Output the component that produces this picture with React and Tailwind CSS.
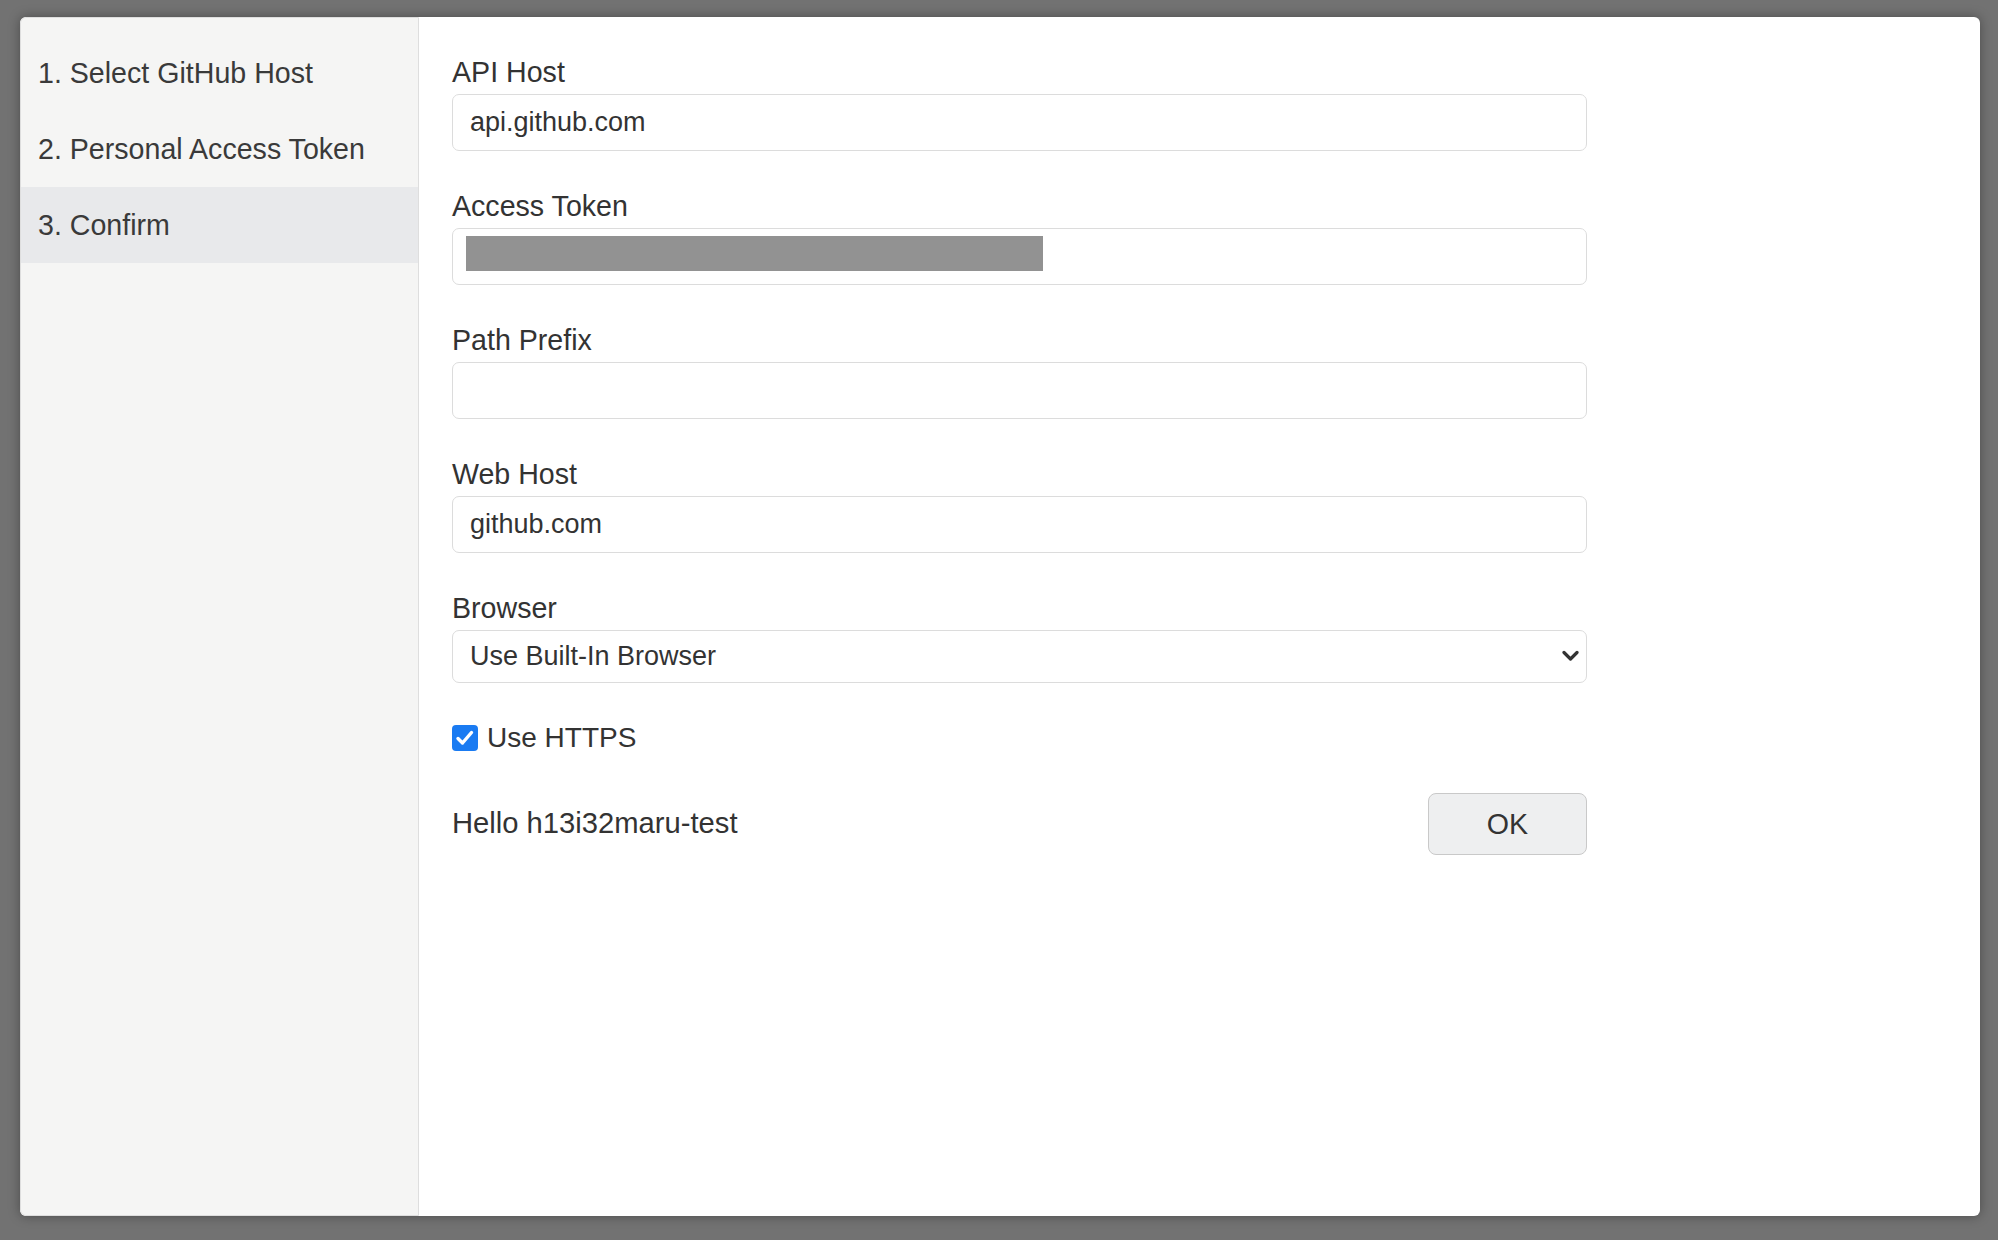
import React from 'react';

// Setup dialog: step list on the left, the confirm form on the right

const steps = ['1. Select GitHub Host', '2. Personal Access Token', '3. Confirm'];

function Field({ label, children }) {
  return (
    <div className="flex flex-col">
      <label className="h-[34px] leading-[34px] text-[28.6px] text-[#333] mb-[5px]">{label}</label>
      {children}
    </div>
  );
}

function TextInput({ value }) {
  return (
    <input
      readOnly
      value={value}
      className="h-[57px] w-full rounded-[7px] border border-[#dcdcdc] bg-white px-[17px] text-[27px] text-[#333] outline-none"
    />
  );
}

export default function App() {
  const active = 2;

  return (
    <div
      className="w-[1998px] h-[1240px] bg-[#727272] pt-[17px] pl-[20px]"
      style={{ fontFamily: '"Liberation Sans", Arial, sans-serif' }}
    >
      <div className="flex w-[1960px] h-[1199px] rounded-[6px] overflow-hidden bg-white shadow-[0_0_12px_rgba(0,0,0,0.35)]">
        {/* Steps */}
        <div className="w-[399px] shrink-0 bg-[#f5f5f4] border border-[#dedede] rounded-l-[6px] pt-[17px]">
          {steps.map((s, i) => (
            <div
              key={s}
              className={
                'h-[76px] flex items-center pl-[17px] text-[28.6px] text-[#3a3a3a] ' +
                (i === active ? 'bg-[#e8e9eb]' : '')
              }
            >
              {s}
            </div>
          ))}
        </div>

        {/* Form */}
        <div className="flex-1 pl-[33px] pt-[38px]">
          <div className="w-[1135px] flex flex-col gap-[38px]">
            <Field label="API Host">
              <TextInput value="api.github.com" />
            </Field>

            <Field label="Access Token">
              <div className="h-[57px] w-full rounded-[7px] border border-[#dcdcdc] bg-white pl-[13px] pt-[7px]">
                <div className="w-[577px] h-[35px] bg-[#929292]" />
              </div>
            </Field>

            <Field label="Path Prefix">
              <TextInput value="" />
            </Field>

            <Field label="Web Host">
              <TextInput value="github.com" />
            </Field>

            <Field label="Browser">
              <div className="relative">
                <select
                  defaultValue="builtin"
                  className="appearance-none h-[53px] w-full rounded-[7px] border border-[#dcdcdc] bg-white px-[17px] text-[27px] text-[#333] outline-none"
                >
                  <option value="builtin">Use Built-In Browser</option>
                  <option value="external">Use External Browser</option>
                </select>
                <svg
                  className="absolute right-[8px] top-[20px] pointer-events-none"
                  width="17"
                  height="12"
                  viewBox="0 0 17 12"
                  fill="none"
                >
                  <path d="M2 2.5 L8.5 9 L15 2.5" stroke="#333" strokeWidth="3.2" strokeLinecap="round" strokeLinejoin="round" />
                </svg>
              </div>
            </Field>

            <div className="flex items-center h-[34px] gap-[9px]">
              <span className="w-[26px] h-[26px] rounded-[4px] bg-[#1a7bf2] flex items-center justify-center">
                <svg width="20" height="18" viewBox="0 0 20 18" fill="none">
                  <path d="M3 9.5 L7.5 14 L16.5 3.5" stroke="#fff" strokeWidth="3.4" strokeLinecap="round" strokeLinejoin="round" />
                </svg>
              </span>
              <span className="text-[28px] text-[#333]">Use HTTPS</span>
            </div>

            <div className="flex items-center justify-between">
              <span className="text-[29.2px] text-[#333]">Hello h13i32maru-test</span>
              <button className="w-[159px] h-[62px] rounded-[8px] border border-[#c9c9c9] bg-[#eeeff0] text-[28.6px] text-[#333]">
                OK
              </button>
            </div>
          </div>
        </div>
      </div>
    </div>
  );
}
